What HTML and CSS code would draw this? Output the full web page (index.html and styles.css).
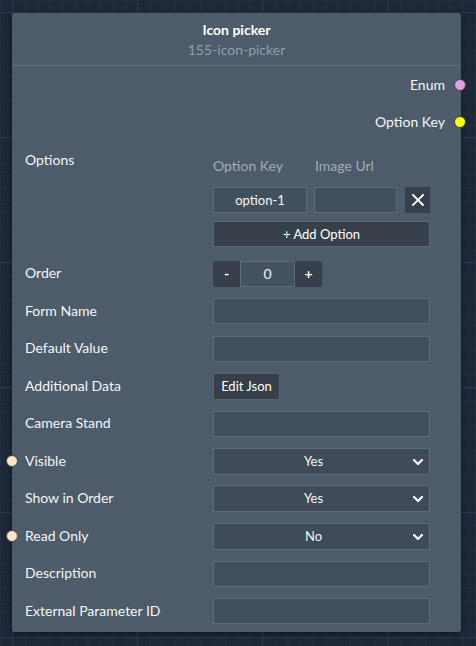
FILE: index.html
```html
<!DOCTYPE html>
<html>
<head>
<meta charset="utf-8">
<link rel="stylesheet" href="styles.css">
</head>
<body>
<div class="node">
  <div class="header">
    <div class="title">Icon picker</div>
    <div class="subtitle">155-icon-picker</div>
  </div>
  <div class="outputs">
    <div class="out-row"><span>Enum</span><i class="port port-out enum"></i></div>
    <div class="out-row"><span>Option Key</span><i class="port port-out key"></i></div>
  </div>
  <div class="options-row">
    <div class="label options-label">Options</div>
    <div class="options-ctrl">
      <div class="opt-head"><span class="col-key">Option Key</span><span class="col-url">Image Url</span></div>
      <div class="opt-line">
        <div class="field col-key centered">option-1</div>
        <div class="field col-url"></div>
        <button class="xbtn"><svg width="14" height="14" viewBox="0 0 14 14"><path d="M2 2 L12 12 M12 2 L2 12" stroke="#fff" stroke-width="1.8" stroke-linecap="square"/></svg></button>
      </div>
      <button class="add-btn">+ Add Option</button>
    </div>
  </div>
  <div class="row">
    <div class="label">Order</div>
    <div class="stepper">
      <button class="step">-</button>
      <div class="step-val">0</div>
      <button class="step">+</button>
    </div>
  </div>
  <div class="row"><div class="label">Form Name</div><div class="field wide"></div></div>
  <div class="row"><div class="label">Default Value</div><div class="field wide"></div></div>
  <div class="row"><div class="label">Additional Data</div><button class="json-btn">Edit Json</button></div>
  <div class="row"><div class="label">Camera Stand</div><div class="field wide"></div></div>
  <div class="row"><i class="port port-in"></i><div class="label">Visible</div><div class="select wide">Yes<svg class="chev" width="12" height="12" viewBox="0 0 12 12"><path d="M2 4 L6 8 L10 4" fill="none" stroke="#fff" stroke-width="2.2" stroke-linecap="round" stroke-linejoin="round"/></svg></div></div>
  <div class="row"><div class="label">Show in Order</div><div class="select wide">Yes<svg class="chev" width="12" height="12" viewBox="0 0 12 12"><path d="M2 4 L6 8 L10 4" fill="none" stroke="#fff" stroke-width="2.2" stroke-linecap="round" stroke-linejoin="round"/></svg></div></div>
  <div class="row"><i class="port port-in"></i><div class="label">Read Only</div><div class="select wide">No<svg class="chev" width="12" height="12" viewBox="0 0 12 12"><path d="M2 4 L6 8 L10 4" fill="none" stroke="#fff" stroke-width="2.2" stroke-linecap="round" stroke-linejoin="round"/></svg></div></div>
  <div class="row"><div class="label">Description</div><div class="field wide"></div></div>
  <div class="row"><div class="label">External Parameter ID</div><div class="field wide"></div></div>
</div>
</body>
</html>
```
FILE: styles.css
```css
html, body {
  margin: 0;
  padding: 0;
}
body {
  width: 476px;
  height: 646px;
  overflow: hidden;
  font-family: "Lato", "Noto Sans", sans-serif;
  color: #f4f6f8;
  background-color: #1d2738;
  background-image:
    linear-gradient(90deg, #2b3850 1px, transparent 1px),
    linear-gradient(#2b3850 1px, transparent 1px),
    linear-gradient(90deg, #232e41 1px, transparent 1px),
    linear-gradient(#232e41 1px, transparent 1px);
  background-size: 125px 125px, 125px 125px, 12.5px 12.5px, 12.5px 12.5px;
  background-position: 12px 12px, 12px 12px, 0 0, 0 0;
  padding-top: 13px;
  padding-left: 12px;
  box-sizing: border-box;
}
.node {
  position: relative;
  width: 449px;
  height: 619px;
  background: #4d5b6a;
  border-radius: 3px;
  box-shadow: 0 2px 6px rgba(0, 0, 0, 0.45);
}
.header {
  height: 53px;
  border-bottom: 1px solid #5f6e7e;
  text-align: center;
  box-sizing: border-box;
  padding-top: 8px;
}
.title {
  font-weight: 700;
  font-size: 14px;
  line-height: 18px;
  color: #ffffff;
}
.subtitle {
  font-size: 14px;
  line-height: 20px;
  color: #8ca0b3;
  margin-top: 1px;
}
.outputs {
  display: flex;
  flex-direction: column;
}
.out-row {
  position: relative;
  height: 37px;
  display: flex;
  align-items: center;
  justify-content: flex-end;
  padding-right: 16px;
  font-size: 14px;
}
.port {
  position: absolute;
  width: 12px;
  height: 12px;
  border-radius: 50%;
  box-sizing: border-box;
  border: 1px solid #3c4753;
  top: 50%;
  margin-top: -6px;
}
.port-out {
  right: -5px;
}
.enum {
  background: #dda0dd;
}
.key {
  background: #ffff00;
}
.port-in {
  left: -6px;
  background: #ffe4c4;
}
.options-row {
  display: flex;
  height: 115px;
  padding-left: 13px;
}
.label {
  width: 188px;
  flex: none;
  font-size: 14px;
  line-height: 20px;
  color: #f4f6f8;
}
.options-label {
  margin-top: 10px;
}
.options-ctrl {
  display: flex;
  flex-direction: column;
  width: 217px;
}
.opt-head {
  display: flex;
  margin-top: 16px;
  height: 20px;
  font-size: 14px;
  line-height: 20px;
  color: #a3acb6;
}
.opt-head .col-key {
  width: 94px;
  margin-right: 8px;
}
.opt-line {
  display: flex;
  margin-top: 11px;
  height: 26px;
}
.field {
  box-sizing: border-box;
  height: 26px;
  background: #424f5c;
  border: 1px solid #5d6c7b;
  font-size: 13px;
  line-height: 24px;
}
.centered {
  text-align: center;
}
.opt-line .col-key {
  width: 94px;
  margin-right: 7px;
}
.opt-line .col-url {
  width: 83px;
  margin-right: 8px;
}
.xbtn {
  width: 25px;
  height: 26px;
  padding: 0;
  border: none;
  background: #363f4a;
  display: flex;
  align-items: center;
  justify-content: center;
}
.add-btn {
  margin-top: 8px;
  height: 26px;
  width: 217px;
  background: #363f4a;
  border: 1px solid #5a6877;
  color: #ffffff;
  font-family: inherit;
  font-size: 13px;
  padding: 0;
}
.row {
  position: relative;
  display: flex;
  align-items: center;
  height: 37.5px;
  padding-left: 13px;
}
.row .label {
  margin-top: -1px;
}
.stepper {
  display: flex;
  height: 26px;
}
.step {
  width: 27px;
  height: 26px;
  border: none;
  padding: 0;
  background: #363f4a;
  color: #ffffff;
  font-family: inherit;
  font-weight: 700;
  font-size: 14px;
}
.step:first-child {
  border-radius: 3px 0 0 3px;
}
.step:last-child {
  border-radius: 0 3px 3px 0;
}
.step-val {
  width: 55px;
  box-sizing: border-box;
  border: 1px solid #5d6c7b;
  background: #45525f;
  text-align: center;
  font-size: 14px;
  line-height: 24px;
}
.wide {
  width: 217px;
}
.json-btn {
  height: 27px;
  width: 67px;
  background: #363f4a;
  border: 1px solid #56636f;
  border-radius: 2px;
  color: #ffffff;
  font-family: inherit;
  font-size: 13px;
  padding: 0;
}
.select {
  position: relative;
  box-sizing: border-box;
  height: 27px;
  padding-right: 16px;
  background: #3f4b58;
  border: 1px solid #5d6c7b;
  font-size: 13px;
  line-height: 25px;
  text-align: center;
}
.chev {
  position: absolute;
  right: 5px;
  top: 7px;
}
```
